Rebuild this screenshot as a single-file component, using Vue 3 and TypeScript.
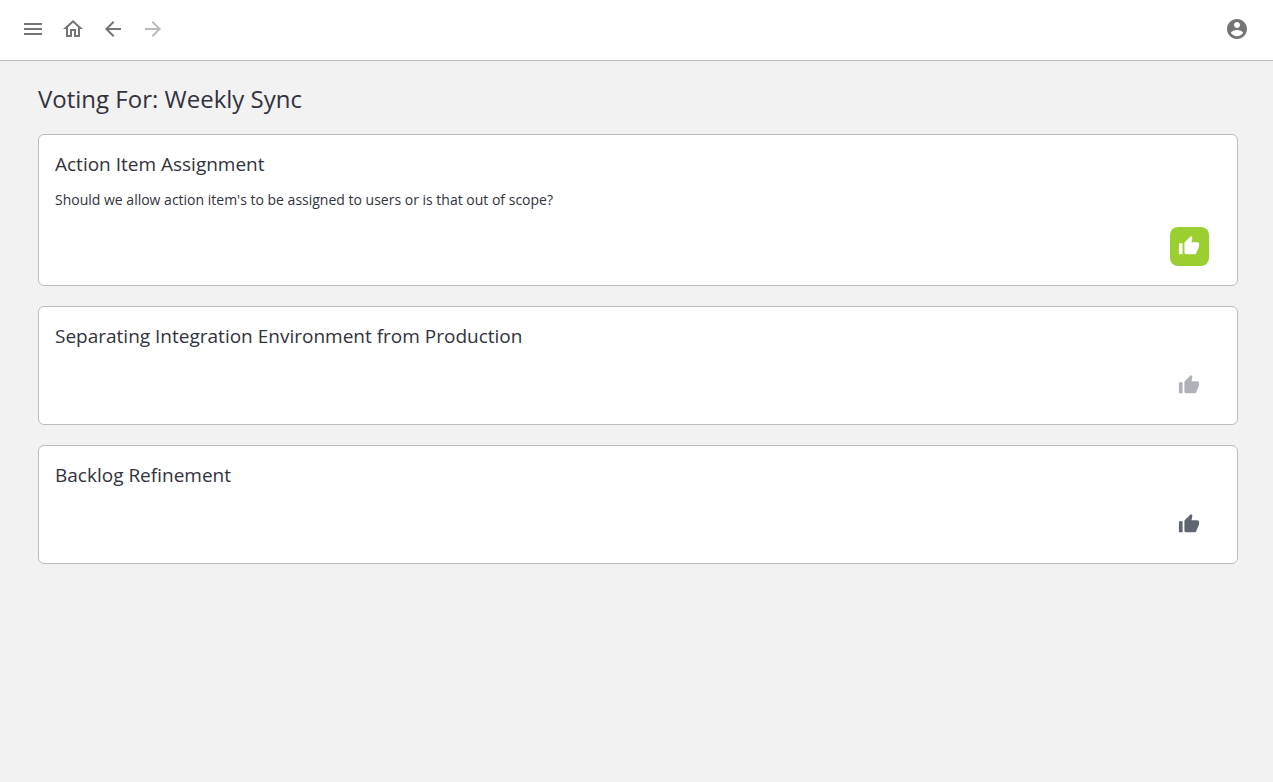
<script setup lang="ts">
import { ref } from 'vue'

type VoteState = 'voted' | 'disabled' | 'idle'

interface Topic {
  id: number
  title: string
  description?: string
  state: VoteState
}

interface NavItem {
  label: string
  path: string
  disabled?: boolean
}

const nav: NavItem[] = [
  { label: 'Menu', path: 'M3 18h18v-2H3v2zm0-5h18v-2H3v2zm0-7v2h18V6H3z' },
  {
    label: 'Home',
    path: 'M12 5.69l5 4.5V18h-2v-6H9v6H7v-7.81l5-4.5M12 3L2 12h3v8h6v-6h2v6h6v-8h3L12 3z',
  },
  { label: 'Back', path: 'M20 11H7.83l5.59-5.59L12 4l-8 8 8 8 1.41-1.41L7.83 13H20v-2z' },
  {
    label: 'Forward',
    path: 'M12 4l-1.41 1.41L16.17 11H4v2h12.17l-5.58 5.59L12 20l8-8z',
    disabled: true,
  },
]

const topics = ref<Topic[]>([
  {
    id: 1,
    title: 'Action Item Assignment',
    description: "Should we allow action item's to be assigned to users or is that out of scope?",
    state: 'voted',
  },
  { id: 2, title: 'Separating Integration Environment from Production', state: 'disabled' },
  { id: 3, title: 'Backlog Refinement', state: 'idle' },
])

function toggleVote(topic: Topic) {
  topic.state = topic.state === 'voted' ? 'idle' : 'voted'
}
</script>

<template>
  <div class="page">
    <header class="toolbar">
      <nav class="toolbar-nav" aria-label="Main">
        <button
          v-for="item in nav"
          :key="item.label"
          type="button"
          class="icon-button"
          :aria-label="item.label"
          :disabled="item.disabled"
        >
          <svg viewBox="0 0 24 24" aria-hidden="true"><path :d="item.path" /></svg>
        </button>
      </nav>
      <button type="button" class="icon-button" aria-label="Account">
        <svg viewBox="0 0 24 24" aria-hidden="true">
          <path
            d="M12 2C6.48 2 2 6.48 2 12s4.48 10 10 10 10-4.48 10-10S17.52 2 12 2zm0 3c1.66 0 3 1.34 3 3s-1.34 3-3 3-3-1.34-3-3 1.34-3 3-3zm0 14.2c-2.5 0-4.71-1.28-6-3.22.03-1.99 4-3.08 6-3.08 1.99 0 5.97 1.09 6 3.08-1.29 1.94-3.5 3.22-6 3.22z"
          />
        </svg>
      </button>
    </header>

    <main class="content">
      <h1 class="title">Voting For: Weekly Sync</h1>
      <section class="topics">
        <article v-for="topic in topics" :key="topic.id" class="card">
          <h2 class="card-title">{{ topic.title }}</h2>
          <p v-if="topic.description" class="card-text">{{ topic.description }}</p>
          <button
            type="button"
            class="vote"
            :class="topic.state"
            :disabled="topic.state === 'disabled'"
            :aria-pressed="topic.state === 'voted'"
            :aria-label="`Vote for ${topic.title}`"
            @click="toggleVote(topic)"
          >
            <svg viewBox="0 0 24 24" aria-hidden="true">
              <path
                d="M1 21h4V9H1v12zm22-11c0-1.1-.9-2-2-2h-6.31l.95-4.57.03-.32c0-.41-.17-.79-.44-1.06L14.17 1 7.59 7.59C7.22 7.95 7 8.45 7 9v10c0 1.1.9 2 2 2h9c.83 0 1.54-.5 1.84-1.22l3.02-7.05c.09-.23.14-.47.14-.73v-2z"
              />
            </svg>
          </button>
        </article>
      </section>
    </main>
  </div>
</template>

<style>
body {
  margin: 0;
  background: #f2f2f2;
}
</style>

<style scoped>
.page {
  min-height: 100vh;
  background: #f2f2f2;
  color: #32323c;
  font-family: 'Open Sans', 'Noto Sans', sans-serif;
}

.toolbar {
  display: flex;
  align-items: center;
  justify-content: space-between;
  padding: 9px 16px 11px 13px;
  border-bottom: 1px solid #bdbdbd;
  background: #fff;
}

.toolbar-nav {
  display: flex;
}

.icon-button {
  display: flex;
  align-items: center;
  justify-content: center;
  width: 40px;
  height: 40px;
  padding: 0;
  border: 0;
  background: none;
  color: #757575;
  cursor: pointer;
}

.icon-button:disabled {
  color: #bababa;
  cursor: default;
}

.icon-button svg {
  width: 24px;
  height: 24px;
  fill: currentColor;
}

.content {
  padding: 20px 35px 20px 38px;
}

.title {
  margin: 0 0 18px;
  font-size: 24px;
  font-weight: 400;
  line-height: 35px;
}

.topics {
  display: grid;
  gap: 20px;
}

.card {
  display: flex;
  flex-direction: column;
  padding: 16px 28px 19px 16px;
  border: 1px solid #bdbdbd;
  border-radius: 6px;
  background: #fff;
}

.card-title {
  margin: 0;
  font-size: 19px;
  font-weight: 400;
  line-height: 27px;
}

.card-text {
  margin: 11px 0 1px;
  font-size: 14px;
  line-height: 21px;
}

.vote {
  display: flex;
  align-self: flex-end;
  margin-top: 16px;
  padding: 8px 9px 9px 8px;
  border: 0;
  border-radius: 8px;
  background: none;
  color: #5f6672;
  cursor: pointer;
}

.vote svg {
  width: 22px;
  height: 22px;
  fill: currentColor;
}

.vote.voted {
  background: #9acf2f;
  color: #fff;
}

.vote.disabled {
  color: #afb3b9;
  cursor: default;
}
</style>
